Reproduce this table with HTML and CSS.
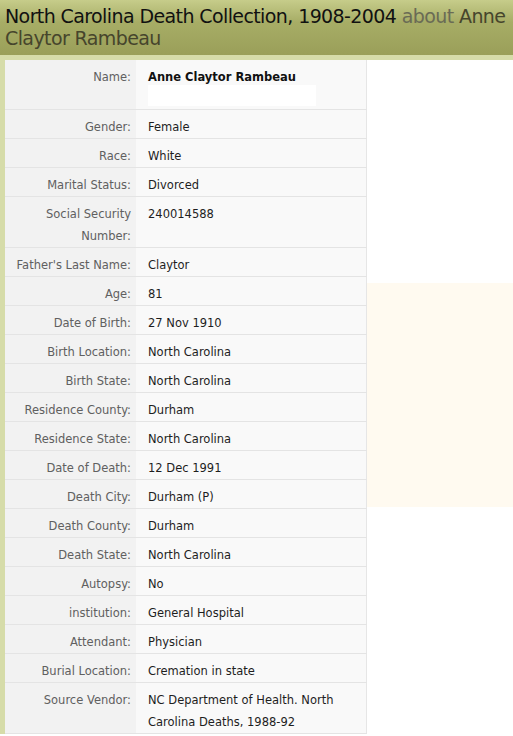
FILE: index.html
```html
<!DOCTYPE html>
<html>
<head>
<meta charset="utf-8">
<link rel="stylesheet" href="styles.css">
</head>
<body>
<div class="header">
  <h1>North Carolina Death Collection, 1908-2004 <span class="about">about</span> <span class="person">Anne Claytor Rambeau</span></h1>
</div>
<div class="page">
  <table class="record">
    <tr><th>Name:</th><td><b>Anne Claytor Rambeau</b><div class="blank"></div></td></tr>
    <tr><th>Gender:</th><td>Female</td></tr>
    <tr><th>Race:</th><td>White</td></tr>
    <tr><th>Marital Status:</th><td>Divorced</td></tr>
    <tr><th>Social Security Number:</th><td>240014588</td></tr>
    <tr><th>Father's Last Name:</th><td>Claytor</td></tr>
    <tr><th>Age:</th><td>81</td></tr>
    <tr><th>Date of Birth:</th><td>27 Nov 1910</td></tr>
    <tr><th>Birth Location:</th><td>North Carolina</td></tr>
    <tr><th>Birth State:</th><td>North Carolina</td></tr>
    <tr><th>Residence County:</th><td>Durham</td></tr>
    <tr><th>Residence State:</th><td>North Carolina</td></tr>
    <tr><th>Date of Death:</th><td>12 Dec 1991</td></tr>
    <tr><th>Death City:</th><td>Durham (P)</td></tr>
    <tr><th>Death County:</th><td>Durham</td></tr>
    <tr><th>Death State:</th><td>North Carolina</td></tr>
    <tr><th>Autopsy:</th><td>No</td></tr>
    <tr><th>institution:</th><td>General Hospital</td></tr>
    <tr><th>Attendant:</th><td>Physician</td></tr>
    <tr><th>Burial Location:</th><td>Cremation in state</td></tr>
    <tr><th>Source Vendor:</th><td>NC Department of Health. North Carolina Deaths, 1988-92</td></tr>
  </table>
  <div class="aside"></div>
</div>
</body>
</html>
```
FILE: styles.css
```css
html, body {
  margin: 0;
  padding: 0;
  background: #ffffff;
}
body {
  font-family: "DejaVu Sans", Verdana, sans-serif;
  font-size: 11.5px;
  color: #222;
}
.header {
  background: linear-gradient(#c6cc8a 0%, #a7ad66 40%, #9a9f59 100%);
  padding: 5px 4px 6px 5px;
  height: 44px;
}
.header h1 {
  margin: 0;
  font-family: "DejaVu Sans", Tahoma, sans-serif;
  font-weight: normal;
  font-size: 19px;
  line-height: 22px;
  color: #111;
  letter-spacing: -0.6px;
}
.header .about {
  color: #6a6b55;
}
.header .person {
  color: #46452c;
}
.page {
  display: flex;
  align-items: flex-start;
  border-top: 5px solid #d6dca9;
  border-left: 5px solid #d6dca9;
}
.record {
  border-collapse: collapse;
  width: 362px;
  flex: none;
  border-right: 1px solid #e6e6e6;
}
.record th, .record td {
  padding: 6px 0 0;
  line-height: 22px;
  vertical-align: top;
  border-bottom: 1px solid #e4e4e4;
}
.record th {
  width: 126px;
  padding-right: 5px;
  text-align: right;
  font-weight: normal;
  color: #606060;
  background: #f2f2f2;
}
.record td {
  padding-left: 12px;
  padding-right: 8px;
  color: #1e1e1e;
  background: #f9f9f9;
}
.record td b {
  color: #111;
}
.blank {
  width: 168px;
  height: 21px;
  margin: -3px 0 3px;
  background: #ffffff;
}
.aside {
  flex: 1;
  margin-top: 223px;
  height: 224px;
  background: #fffaf0;
}
```
